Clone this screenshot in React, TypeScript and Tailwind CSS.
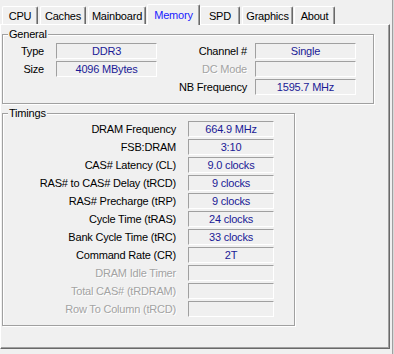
import React from "react";

const field = "h-[16px] border border-t-[#a0a0a0] border-l-[#a0a0a0] border-r-white border-b-white flex items-center justify-center text-[#1a1a96] leading-[14px]";
const dim = "text-[#a3a3a3] [text-shadow:1px_1px_0_#ffffff]";

const tabs = [
    { name: "CPU", cls: "ml-[2px] w-[36px]" },
    { name: "Caches", cls: "ml-[2px] w-[46px]" },
    { name: "Mainboard", cls: "ml-[2px] w-[58px]" },
    { name: "Memory", cls: "ml-[1px] w-[53px]", active: true },
    { name: "SPD", cls: "ml-0 w-[40px]" },
    { name: "Graphics", cls: "ml-[2px] w-[51px]" },
    { name: "About", cls: "ml-[1px] w-[41px]" },
];

const timings = [
    { label: "DRAM Frequency", value: "664.9 MHz" },
    { label: "FSB:DRAM", value: "3:10" },
    { label: "CAS# Latency (CL)", value: "9.0 clocks" },
    { label: "RAS# to CAS# Delay (tRCD)", value: "9 clocks" },
    { label: "RAS# Precharge (tRP)", value: "9 clocks" },
    { label: "Cycle Time (tRAS)", value: "24 clocks" },
    { label: "Bank Cycle Time (tRC)", value: "33 clocks" },
    { label: "Command Rate (CR)", value: "2T" },
    { label: "DRAM Idle Timer", value: "", disabled: true },
    { label: "Total CAS# (tRDRAM)", value: "", disabled: true },
    { label: "Row To Column (tRCD)", value: "", disabled: true },
];

function Group({ title, className, children }: { title: string; className: string; children: React.ReactNode }) {
    return (
        <div className={`relative border border-[#a0a0a0] shadow-[1px_1px_0_#ffffff,inset_1px_1px_0_#ffffff] ${className}`}>
            <span className="absolute -top-[7px] left-[5px] px-[1px] bg-[#f0f0f0] leading-[13px] text-black">{title}</span>
            {children}
        </div>
    );
}

export default function App() {
    return (
        <div className="flex w-[394px] h-[354px] bg-[#f0f0f0] text-[11px] leading-[13px] tracking-[-0.2px] text-black overflow-hidden" style={{ fontFamily: '"Liberation Sans", Arial, sans-serif' }}>
            <div className="w-[392px] flex flex-col">
                <div className="flex items-end h-[24px]">
                    {tabs.map((t) =>
                        t.active ? (
                            <div key={t.name} className={`${t.cls} relative z-10 h-[21px] -mb-px bg-[#f0f0f0] border-t border-l border-white border-r border-r-[#696969] shadow-[inset_-1px_0_0_#a0a0a0] rounded-t-[2px] flex justify-center pt-[4px] text-[#1a1aff]`}>
                                {t.name}
                            </div>
                        ) : (
                            <div key={t.name} className={`${t.cls} h-[18px] border-t border-l border-white border-r border-r-[#696969] shadow-[inset_-1px_0_0_#a0a0a0] rounded-t-[2px] flex items-center justify-center pt-px`}>
                                {t.name}
                            </div>
                        )
                    )}
                </div>

                <div className="w-[390px] h-[325px] border-t border-l border-white border-r border-b border-r-[#696969] border-b-[#696969] shadow-[inset_-1px_-1px_0_#a0a0a0] pl-[1px] pt-[9px]">
                    <Group title="General" className="w-[372px] pt-[8px] pb-[8px]">
                        <div className="flex flex-col gap-[2px]">
                            <div className="flex items-center">
                                <span className="w-[41px] text-right">Type</span>
                                <div className={`${field} ml-[12px] w-[101px]`}>DDR3</div>
                                <span className="w-[90px] text-right">Channel #</span>
                                <div className={`${field} ml-[8px] w-[101px]`}>Single</div>
                            </div>
                            <div className="flex items-center">
                                <span className="w-[41px] text-right">Size</span>
                                <div className={`${field} ml-[12px] w-[101px]`}>4096 MBytes</div>
                                <span className={`w-[90px] text-right ${dim}`}>DC Mode</span>
                                <div className={`${field} ml-[8px] w-[101px]`}></div>
                            </div>
                            <div className="flex items-center">
                                <span className="w-[41px]"></span>
                                <div className="ml-[12px] w-[101px] h-[16px]"></div>
                                <span className="w-[90px] text-right">NB Frequency</span>
                                <div className={`${field} ml-[8px] w-[101px]`}>1595.7 MHz</div>
                            </div>
                        </div>
                    </Group>

                    <Group title="Timings" className="mt-[9px] w-[293px] pt-[7px] pb-[8px]">
                        <div className="flex flex-col gap-[2px]">
                            {timings.map((r) => (
                                <div key={r.label} className="flex items-center">
                                    <span className={`w-[173px] text-right whitespace-nowrap ${r.disabled ? dim : ""}`}>{r.label}</span>
                                    <div className={`${field} ml-[12px] w-[86px]`}>{r.value}</div>
                                </div>
                            ))}
                        </div>
                    </Group>
                </div>
            </div>
            <div className="w-px h-full bg-[#a0a0a0]"></div>
            <div className="w-px h-full bg-[#d8d8d8]"></div>
        </div>
    );
}
